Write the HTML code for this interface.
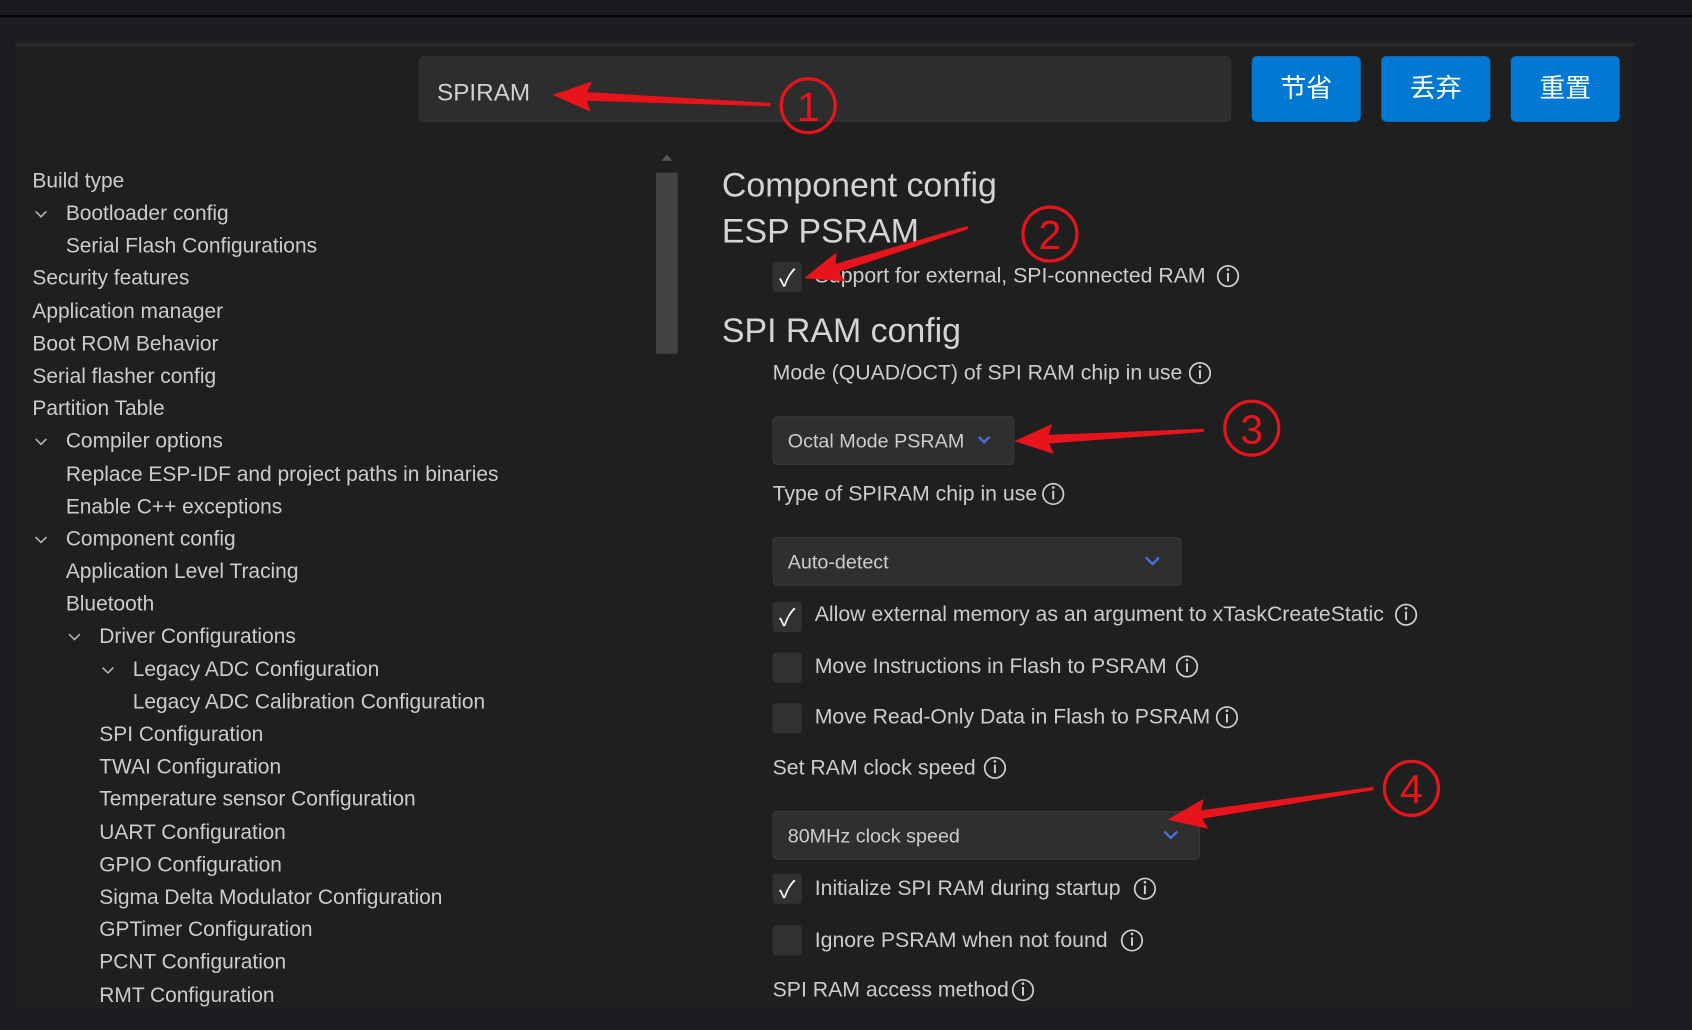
<!DOCTYPE html>
<html><head><meta charset="utf-8"><style>
*{margin:0;padding:0;box-sizing:border-box}
html,body{width:1692px;height:1030px;overflow:hidden;background:#1d1d21}
#w{position:absolute;left:0;top:0;width:1568px;height:955px;transform:scale(1.0791,1.0785);transform-origin:0 0;font-family:"Liberation Sans","Noto Sans CJK SC",sans-serif;color:#cccccc}
.a{position:absolute;white-space:nowrap}
.t{font-size:19.4px;line-height:24px}
.r{font-size:19.7px;line-height:24px}
.h{font-size:31.4px;line-height:36px;color:#d4d4d4}
.cb{position:absolute;width:27px;height:28px;background:#313131;border-radius:3px;color:#fff;font-size:22px;line-height:30px;text-align:center}
.dd{position:absolute;background:#2f2f2f;border:1px solid #3a3a3a;border-radius:4px;font-size:18.3px;line-height:44px;padding-left:13px}
.btn{position:absolute;top:52px;width:101px;height:61px;background:#0078d4;border-radius:5px;color:#fff;font-size:24px;line-height:61px;text-align:center}
</style></head><body><div id="w">
<div class="a" style="left:0;top:0;width:1568px;height:14px;background:#1b1b1f"></div>
<div class="a" style="left:0;top:14px;width:1568px;height:2px;background:#050505"></div>
<div class="a" style="left:14px;top:40px;width:1501px;height:895px;background:#1f1f1f;border-top:3px solid #2a2a2a"></div>
<div class="a" style="left:388px;top:52px;width:753px;height:61px;background:#2d2d2d;border:1px solid #343434;border-radius:5px"></div>
<div class="a" style="left:405px;top:72px;font-size:22.5px;line-height:28px;color:#d0d0d0">SPIRAM</div>
<div class="btn" style="left:1160px">节省</div>
<div class="btn" style="left:1280px">丢弃</div>
<div class="btn" style="left:1400px">重置</div>
<div class="a" style="left:608px;top:160px;width:20px;height:168px;background:#424242"></div>
<div class="a" style="left:613px;top:143px;width:0;height:0;border-left:5px solid transparent;border-right:5px solid transparent;border-bottom:6px solid #555"></div>
<div class="t">
<div class="a" style="left:30px;top:156px">Build type</div>
<div class="a" style="left:61px;top:186px">Bootloader config</div>
<div class="a" style="left:61px;top:216px">Serial Flash Configurations</div>
<div class="a" style="left:30px;top:246px">Security features</div>
<div class="a" style="left:30px;top:277px">Application manager</div>
<div class="a" style="left:30px;top:307px">Boot ROM Behavior</div>
<div class="a" style="left:30px;top:337px">Serial flasher config</div>
<div class="a" style="left:30px;top:367px">Partition Table</div>
<div class="a" style="left:61px;top:397px">Compiler options</div>
<div class="a" style="left:61px;top:428px">Replace ESP-IDF and project paths in binaries</div>
<div class="a" style="left:61px;top:458px">Enable C++ exceptions</div>
<div class="a" style="left:61px;top:488px">Component config</div>
<div class="a" style="left:61px;top:518px">Application Level Tracing</div>
<div class="a" style="left:61px;top:548px">Bluetooth</div>
<div class="a" style="left:92px;top:578px">Driver Configurations</div>
<div class="a" style="left:123px;top:609px">Legacy ADC Configuration</div>
<div class="a" style="left:123px;top:639px">Legacy ADC Calibration Configuration</div>
<div class="a" style="left:92px;top:669px">SPI Configuration</div>
<div class="a" style="left:92px;top:699px">TWAI Configuration</div>
<div class="a" style="left:92px;top:729px">Temperature sensor Configuration</div>
<div class="a" style="left:92px;top:760px">UART Configuration</div>
<div class="a" style="left:92px;top:790px">GPIO Configuration</div>
<div class="a" style="left:92px;top:820px">Sigma Delta Modulator Configuration</div>
<div class="a" style="left:92px;top:850px">GPTimer Configuration</div>
<div class="a" style="left:92px;top:880px">PCNT Configuration</div>
<div class="a" style="left:92px;top:911px">RMT Configuration</div>
</div>
<div class="a h" style="left:669px;top:154px">Component config</div>
<div class="a h" style="left:669px;top:197px">ESP PSRAM</div>
<div class="cb" style="left:716px;top:243px">✓</div>
<div class="a r" style="left:755px;top:244px">Support for external, SPI-connected RAM</div>
<div class="a h" style="left:669px;top:289px">SPI RAM config</div>
<div class="a r" style="left:716px;top:334px">Mode (QUAD/OCT) of SPI RAM chip in use</div>
<div class="dd" style="left:716px;top:386px;width:224px;height:45px">Octal Mode PSRAM</div>
<div class="a r" style="left:716px;top:446px">Type of SPIRAM chip in use</div>
<div class="dd" style="left:716px;top:498px;width:379px;height:45px">Auto-detect</div>
<div class="cb" style="left:716px;top:558px">✓</div>
<div class="a r" style="left:755px;top:558px">Allow external memory as an argument to xTaskCreateStatic</div>
<div class="cb" style="left:716px;top:605px"></div>
<div class="a r" style="left:755px;top:606px">Move Instructions in Flash to PSRAM</div>
<div class="cb" style="left:716px;top:652px"></div>
<div class="a r" style="left:755px;top:653px">Move Read-Only Data in Flash to PSRAM</div>
<div class="a r" style="left:716px;top:700px">Set RAM clock speed</div>
<div class="dd" style="left:716px;top:752px;width:396px;height:45px">80MHz clock speed</div>
<div class="cb" style="left:716px;top:810px">✓</div>
<div class="a r" style="left:755px;top:812px">Initialize SPI RAM during startup</div>
<div class="cb" style="left:716px;top:858px"></div>
<div class="a r" style="left:755px;top:860px">Ignore PSRAM when not found</div>
<div class="a r" style="left:716px;top:906px">SPI RAM access method</div>
<svg class="a" style="left:0;top:0" width="1568" height="955" viewBox="0 0 1568 955">
<g fill="none" stroke="#bbbbbb" stroke-width="1.4">
<path d="M33 196l5 5 5-5"/><path d="M33 407l5 5 5-5"/><path d="M33 498l5 5 5-5"/><path d="M64 588l5 5 5-5"/><path d="M95 619l5 5 5-5"/>
</g>
<g fill="none" stroke="#cfcfcf" stroke-width="1.6">
<circle cx="1138" cy="256" r="9.5"/><circle cx="1112" cy="346" r="9.5"/><circle cx="976" cy="458" r="9.5"/>
<circle cx="1303" cy="570" r="9.5"/><circle cx="1100" cy="618" r="9.5"/><circle cx="1137" cy="665" r="9.5"/>
<circle cx="922" cy="712" r="9.5"/><circle cx="1061" cy="824" r="9.5"/><circle cx="1049" cy="872" r="9.5"/><circle cx="948" cy="918" r="9.5"/>
</g>
<g stroke="#cfcfcf" stroke-width="1.8">
<path d="M1138 253v8M1112 343v8M976 455v8M1303 567v8M1100 615v8M1137 662v8M922 709v8M1061 821v8M1049 869v8M948 915v8"/>
</g>
<g fill="#cfcfcf">
<circle cx="1138" cy="250" r="1.2"/><circle cx="1112" cy="340" r="1.2"/><circle cx="976" cy="452" r="1.2"/><circle cx="1303" cy="564" r="1.2"/><circle cx="1100" cy="612" r="1.2"/><circle cx="1137" cy="659" r="1.2"/><circle cx="922" cy="706" r="1.2"/><circle cx="1061" cy="818" r="1.2"/><circle cx="1049" cy="866" r="1.2"/><circle cx="948" cy="912" r="1.2"/>
</g>
<g fill="none" stroke="#4a6fe0" stroke-width="2.2">
<path d="M907 405l5 5 5-5"/><path d="M1062 517l6 6 6-6"/><path d="M1079 771l6 6 6-6"/>
</g>
<g fill="#e8141c">
<polygon points="0,0 36,-14 32,-4 202,-1.5 202,1.5 32,4 36,14" transform="translate(512,88) rotate(2.55)"/>
<polygon points="0,0 36,-14 32,-4 159,-1.5 159,1.5 32,4 36,14" transform="translate(745,258) rotate(-17.2)"/>
<polygon points="0,0 36,-14 32,-4 176,-1.5 176,1.5 32,4 36,14" transform="translate(940,409) rotate(-3.25)"/>
<polygon points="0,0 36,-14 32,-4 193,-1.5 193,1.5 32,4 36,14" transform="translate(1082,760) rotate(-8.6)"/>
</g>
<g fill="none" stroke="#e8141c" stroke-width="3">
<circle cx="749" cy="98" r="25"/><circle cx="973" cy="217" r="25"/><circle cx="1160" cy="397" r="25"/><circle cx="1308" cy="731" r="25"/>
</g>
<g fill="#e8141c" font-family="Liberation Sans,sans-serif" font-size="38" text-anchor="middle">
<text x="749" y="112">1</text><text x="973" y="231">2</text><text x="1160" y="411">3</text><text x="1308" y="745">4</text>
</g>
</svg>
</div></body></html>
